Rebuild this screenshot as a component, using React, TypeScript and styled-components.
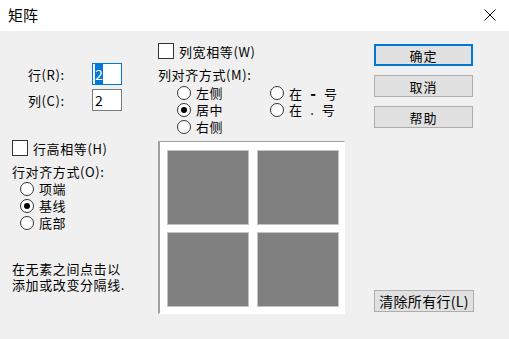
import styled, { createGlobalStyle } from 'styled-components';

const GlobalStyle = createGlobalStyle`
  * { box-sizing: border-box; }
  html, body { margin: 0; padding: 0; background: #f0f0f0; }
  body {
    font-family: "Noto Sans CJK SC", "Liberation Sans", sans-serif;
    color: #000;
  }
`;

function App() {
  return (
    <>
      <GlobalStyle />
      <Window>
        <TitleBar>
          <Title>矩阵</Title>
          <CloseIcon viewBox="0 0 12 12">
            <path d="M0.5 0.5 L11.5 11.5 M11.5 0.5 L0.5 11.5" stroke="#000" strokeWidth="1" fill="none" />
          </CloseIcon>
        </TitleBar>

        <Body>
          <LeftCol>
            <Fields>
              <FieldRow>
                <FieldLabel>行(R):</FieldLabel>
                <NumberBox $focused>
                  <Selected>2</Selected>
                </NumberBox>
              </FieldRow>
              <FieldRow>
                <FieldLabel>列(C):</FieldLabel>
                <NumberBox>2</NumberBox>
              </FieldRow>
            </Fields>

            <CheckRow $top={29}>
              <CheckBox />
              <span>行高相等(H)</span>
            </CheckRow>
            <GroupLabel>行对齐方式(O):</GroupLabel>
            <RadioList>
              <RadioRow>
                <Radio />
                <span>项端</span>
              </RadioRow>
              <RadioRow>
                <Radio $checked />
                <span>基线</span>
              </RadioRow>
              <RadioRow>
                <Radio />
                <span>底部</span>
              </RadioRow>
            </RadioList>

            <Note>
              <div>在无素之间点击以</div>
              <div>添加或改变分隔线.</div>
            </Note>
          </LeftCol>

          <MidCol>
            <CheckRow $top={12}>
              <CheckBox />
              <span>列宽相等(W)</span>
            </CheckRow>
            <GroupLabel>列对齐方式(M):</GroupLabel>
            <RadioGrid>
              <RadioRow>
                <Radio />
                <span>左侧</span>
              </RadioRow>
              <RadioRow>
                <Radio />
                <Spaced>
                  在 <Mark $bold>-</Mark> 号
                </Spaced>
              </RadioRow>
              <RadioRow>
                <Radio $checked />
                <span>居中</span>
              </RadioRow>
              <RadioRow>
                <Radio />
                <Spaced>
                  在 <Mark>.</Mark> 号
                </Spaced>
              </RadioRow>
              <RadioRow>
                <Radio />
                <span>右侧</span>
              </RadioRow>
            </RadioGrid>

            <Preview>
              <Cell />
              <Cell />
              <Cell />
              <Cell />
            </Preview>
          </MidCol>

          <RightCol>
            <ButtonStack>
              <Button $primary>确定</Button>
              <Button>取消</Button>
              <Button>帮助</Button>
            </ButtonStack>
            <WideButton>清除所有行(L)</WideButton>
          </RightCol>
        </Body>
      </Window>
    </>
  );
}

export default App;

const Window = styled.div`
  width: 509px;
  height: 339px;
  display: flex;
  flex-direction: column;
  background: #f0f0f0;
  overflow: hidden;
`;

const TitleBar = styled.div`
  height: 31px;
  flex: none;
  background: #fff;
  display: flex;
  align-items: center;
  justify-content: space-between;
  padding: 0 13px 2px 8px;
`;

const Title = styled.div`
  font-size: 15px;
  line-height: 1;
`;

const CloseIcon = styled.svg`
  width: 12px;
  height: 12px;
`;

const Body = styled.div`
  flex: 1;
  display: flex;
  font-size: 13px;
  letter-spacing: 0.6px;
`;

const LeftCol = styled.div`
  width: 158px;
  padding-left: 12px;
  display: flex;
  flex-direction: column;
`;

const Fields = styled.div`
  margin-top: 32px;
  display: flex;
  flex-direction: column;
  gap: 4px;
`;

const FieldRow = styled.div`
  display: flex;
  align-items: center;
  height: 22px;
`;

const FieldLabel = styled.span`
  width: 80px;
  padding-left: 16px;
`;

const NumberBox = styled.div<{ $focused?: boolean }>`
  width: 30px;
  height: 22px;
  background: #fff;
  border: 1px solid ${(p) => (p.$focused ? '#0078d7' : '#7a7a7a')};
  font-size: 14px;
  line-height: 20px;
  padding-left: 2px;
`;

const Selected = styled.span`
  background: #0078d7;
  color: #fff;
`;

const CheckRow = styled.div<{ $top: number }>`
  margin-top: ${(p) => p.$top}px;
  display: flex;
  align-items: center;
  gap: 5px;
  height: 16px;
`;

const CheckBox = styled.div`
  width: 16px;
  height: 16px;
  background: #fff;
  border: 1px solid #333;
`;

const GroupLabel = styled.div`
  margin-top: 8px;
  height: 16px;
  line-height: 16px;
`;

const RadioList = styled.div`
  padding-left: 8px;
  display: flex;
  flex-direction: column;
`;

const RadioGrid = styled.div`
  margin-top: 1px;
  padding-left: 19px;
  display: grid;
  grid-template-columns: 93px auto;
`;

const RadioRow = styled.div`
  display: flex;
  align-items: center;
  gap: 5px;
  height: 17px;
  line-height: 17px;
`;

const Radio = styled.div<{ $checked?: boolean }>`
  width: 14px;
  height: 14px;
  border-radius: 50%;
  border: 1px solid #333;
  background: #fff;
  display: flex;
  align-items: center;
  justify-content: center;

  &::after {
    content: '';
    width: 6px;
    height: 6px;
    border-radius: 50%;
    background: ${(p) => (p.$checked ? '#000' : 'transparent')};
  }
`;

const Spaced = styled.span`
  white-space: pre;
  word-spacing: 4px;
`;

const Mark = styled.span<{ $bold?: boolean }>`
  font-weight: ${(p) => (p.$bold ? 900 : 400)};
  font-size: ${(p) => (p.$bold ? 15 : 13)}px;
`;

const Note = styled.div`
  margin-top: 30px;
  line-height: 16px;
`;

const MidCol = styled.div`
  width: 187px;
  display: flex;
  flex-direction: column;
`;

const Preview = styled.div`
  margin-top: 6px;
  width: 187px;
  height: 173px;
  background: #fff;
  border-top: 1px solid #a0a0a0;
  border-left: 2px solid #a0a0a0;
  border-right: 1px solid #fff;
  border-bottom: 1px solid #fff;
  padding: 8px 0 0 7px;
  display: grid;
  grid-template-columns: 82px 82px;
  grid-template-rows: 75px 75px;
  column-gap: 8px;
  row-gap: 7px;
`;

const Cell = styled.div`
  background: #808080;
  border: 1px solid #c4c4c4;
`;

const RightCol = styled.div`
  margin-left: 29px;
  width: 100px;
  display: flex;
  flex-direction: column;
  justify-content: space-between;
  padding: 13px 0 27px;
`;

const ButtonStack = styled.div`
  display: flex;
  flex-direction: column;
  gap: 9px;
`;

const Button = styled.div<{ $primary?: boolean }>`
  width: 99px;
  height: 22px;
  background: #e1e1e1;
  border: ${(p) => (p.$primary ? '2px solid #0078d7' : '1px solid #adadad')};
  display: flex;
  align-items: center;
  justify-content: center;
  font-size: 13px;
  letter-spacing: 1px;
`;

const WideButton = styled.div`
  width: 100px;
  height: 22px;
  background: #e1e1e1;
  border: 1px solid #adadad;
  display: flex;
  align-items: center;
  justify-content: center;
  font-size: 14px;
  letter-spacing: 0.3px;
  white-space: nowrap;
`;
